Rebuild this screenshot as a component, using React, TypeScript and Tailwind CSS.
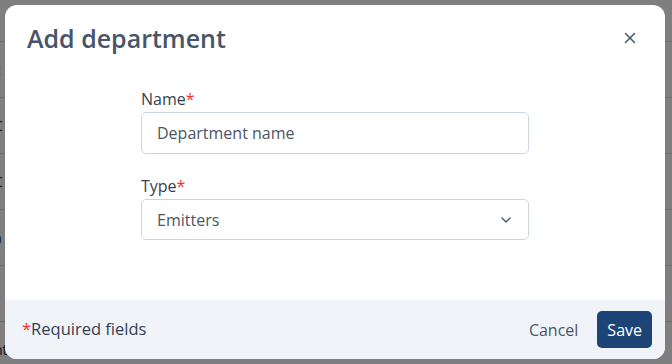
import { X, ChevronDown } from "lucide-react";

const rows = ["c", "C", "C", "a", "", "nt"];

export default function App() {
  return (
    <div
      className="relative w-[672px] h-[364px] overflow-hidden bg-white"
      style={{ fontFamily: '"Open Sans", "Noto Sans", sans-serif' }}
    >
      {/* page behind the dialog */}
      <div className="pt-[41px]">
        {rows.map((r, i) => (
          <div
            key={i}
            className="h-[56px] border-t border-gray-300 flex items-center text-[14px] text-gray-800"
          >
            <span className="-ml-[6px]">{r}</span>
          </div>
        ))}
      </div>
      <div className="absolute inset-0 bg-black/50" />

      {/* dialog */}
      <div className="absolute left-[5px] top-[5px] w-[660px] h-[354px] bg-white rounded-[12px] overflow-hidden flex flex-col">
        <div className="flex items-center justify-between pl-[22px] pr-[26px] pt-[13px]">
          <h2 className="text-[25px] font-semibold text-[#475569] leading-[40px]">
            Add department
          </h2>
          <X size={18} strokeWidth={2} className="text-[#475569]" />
        </div>

        <div className="flex-1 flex flex-col pl-[136px] pr-[136px] pt-[30px] gap-[21px]">
          <div>
            <label className="block text-[16px] text-[#374151] leading-[22px] mb-[2px]">
              Name<span className="text-red-500">*</span>
            </label>
            <div className="h-[42px] border border-[#cbd5e1] rounded-[5px] flex items-center px-[15px] text-[16px] text-[#4b5563]">
              Department name
            </div>
          </div>
          <div>
            <label className="block text-[16px] text-[#374151] leading-[22px] mb-[2px]">
              Type<span className="text-red-500">*</span>
            </label>
            <div className="h-[41px] border border-[#cbd5e1] rounded-[5px] flex items-center justify-between pl-[15px] pr-[14px] text-[16px] text-[#4b5563]">
              <span>Emitters</span>
              <ChevronDown size={16} strokeWidth={2} className="text-[#475569]" />
            </div>
          </div>
        </div>

        <div className="h-[59px] bg-[#f0f3f8] flex items-center justify-between pl-[17px] pr-[13px]">
          <span className="text-[16.5px] text-[#334155]">
            <span className="text-red-500">*</span>Required fields
          </span>
          <div className="flex items-center gap-[19px]">
            <span className="text-[16px] text-[#4b5563]">Cancel</span>
            <button className="h-[37px] px-[10px] rounded-[5px] bg-[#1d4477] text-white text-[16px]">
              Save
            </button>
          </div>
        </div>
      </div>
    </div>
  );
}
